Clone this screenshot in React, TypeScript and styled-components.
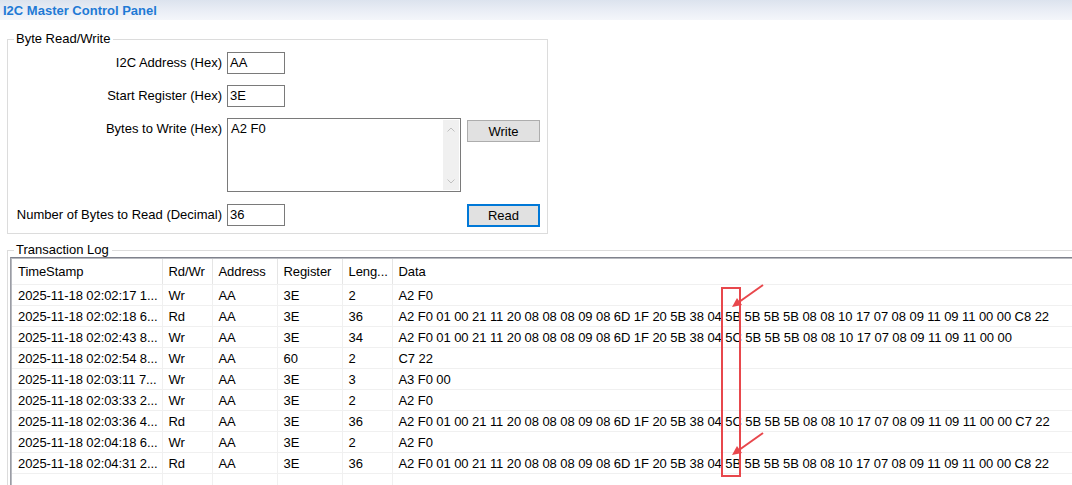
import styled, { createGlobalStyle } from 'styled-components'

const GlobalStyle = createGlobalStyle`
    html, body {
        margin: 0;
        padding: 0;
        background: #ffffff;
        overflow: hidden;
    }
    body {
        font-family: "Liberation Sans", Arial, sans-serif;
        font-size: 13px;
        color: #000000;
    }
`

const rows = [
    ['2025-11-18 02:02:17 1...', 'Wr', 'AA', '3E', '2', 'A2 F0'],
    ['2025-11-18 02:02:18 6...', 'Rd', 'AA', '3E', '36', 'A2 F0 01 00 21 11 20 08 08 08 09 08 6D 1F 20 5B 38 04 5B 5B 5B 5B 08 08 10 17 07 08 09 11 09 11 00 00 C8 22'],
    ['2025-11-18 02:02:43 8...', 'Wr', 'AA', '3E', '34', 'A2 F0 01 00 21 11 20 08 08 08 09 08 6D 1F 20 5B 38 04 5C 5B 5B 5B 08 08 10 17 07 08 09 11 09 11 00 00'],
    ['2025-11-18 02:02:54 8...', 'Wr', 'AA', '60', '2', 'C7 22'],
    ['2025-11-18 02:03:11 7...', 'Wr', 'AA', '3E', '3', 'A3 F0 00'],
    ['2025-11-18 02:03:33 2...', 'Wr', 'AA', '3E', '2', 'A2 F0'],
    ['2025-11-18 02:03:36 4...', 'Rd', 'AA', '3E', '36', 'A2 F0 01 00 21 11 20 08 08 08 09 08 6D 1F 20 5B 38 04 5C 5B 5B 5B 08 08 10 17 07 08 09 11 09 11 00 00 C7 22'],
    ['2025-11-18 02:04:18 6...', 'Wr', 'AA', '3E', '2', 'A2 F0'],
    ['2025-11-18 02:04:31 2...', 'Rd', 'AA', '3E', '36', 'A2 F0 01 00 21 11 20 08 08 08 09 08 6D 1F 20 5B 38 04 5B 5B 5B 5B 08 08 10 17 07 08 09 11 09 11 00 00 C8 22'],
]

const columns = [
    { title: 'TimeStamp', width: 150 },
    { title: 'Rd/Wr', width: 50 },
    { title: 'Address', width: 65 },
    { title: 'Register', width: 65 },
    { title: 'Leng...', width: 50 },
    { title: 'Data', width: 760 },
]

const Chevron = ({ up }: { up?: boolean }) => (
    <svg width="8" height="5" viewBox="0 0 8 5">
        <polyline
            points={up ? '0.5,4.5 4,1 7.5,4.5' : '0.5,0.5 4,4 7.5,0.5'}
            fill="none"
            stroke="#c0c0c0"
            strokeWidth="1"
        />
    </svg>
)

const Annotation = () => (
    <Overlay width="1072" height="485" viewBox="0 0 1072 485">
        <rect x="722" y="288" width="18" height="188" fill="none" stroke="#e8474c" strokeWidth="2" />
        <line x1="763" y1="285" x2="739" y2="302" stroke="#e8474c" strokeWidth="2" />
        <polygon points="732,307 742,305 737,298" fill="#e8474c" />
        <line x1="763" y1="433" x2="739" y2="450" stroke="#e8474c" strokeWidth="2" />
        <polygon points="732,455 742,453 737,446" fill="#e8474c" />
    </Overlay>
)

const App = () => {
    return (
        <>
        <GlobalStyle />
        <Page>
            <TitleBar>I2C Master Control Panel</TitleBar>
            <Content>
                <GroupBox $width="541px">
                    <Legend $offset="-1px">Byte Read/Write</Legend>
                    <FormGrid>
                        <Label>I2C Address (Hex)</Label>
                        <TextBox>AA</TextBox>
                        <span />

                        <Label>Start Register (Hex)</Label>
                        <TextBox>3E</TextBox>
                        <span />

                        <Label $top>Bytes to Write (Hex)</Label>
                        <TextArea>
                            <TextAreaText>A2 F0</TextAreaText>
                            <ScrollBar>
                                <Chevron up />
                                <Chevron />
                            </ScrollBar>
                        </TextArea>
                        <Button $top>Write</Button>

                        <Label>Number of Bytes to Read (Decimal)</Label>
                        <TextBox>36</TextBox>
                        <Button $focused>Read</Button>
                    </FormGrid>
                </GroupBox>

                <LogBox $width="1100px">
                    <Legend $offset="4px">Transaction Log</Legend>
                    <ListView>
                        <Table>
                            <colgroup>
                                {columns.map((c) => <col key={c.title} style={{ width: c.width }} />)}
                            </colgroup>
                            <thead>
                                <tr>
                                    {columns.map((c) => <HeadCell key={c.title}>{c.title}</HeadCell>)}
                                </tr>
                            </thead>
                            <tbody>
                                {rows.map((r, i) => (
                                    <tr key={i}>
                                        {r.map((v, j) => <Cell key={j}>{v}</Cell>)}
                                    </tr>
                                ))}
                                <tr>
                                    {columns.map((c) => <Cell key={c.title}>&nbsp;</Cell>)}
                                </tr>
                            </tbody>
                        </Table>
                    </ListView>
                </LogBox>
            </Content>
            <Annotation />
        </Page>
        </>
    )
}

export default App

const Page = styled.div`
    position: relative;
    width: 1072px;
    height: 485px;
    overflow: hidden;
    background: #ffffff;
`

const TitleBar = styled.div`
    height: 20px;
    line-height: 21px;
    padding-left: 3px;
    background: linear-gradient(to bottom, #dce3ee 0%, #e9edf5 50%, #f4f6fa 100%);
    color: #1f7ad5;
    font-weight: bold;
    font-size: 13px;
`

const Content = styled.div`
    padding: 12px 0 0 7px;
`

const GroupBox = styled.fieldset<{ $width: string }>`
    box-sizing: border-box;
    width: ${(p) => p.$width};
    margin: 0;
    padding: 6px 7px 7px 7px;
    border: 1px solid #dcdcdc;
`

const LogBox = styled(GroupBox)`
    margin-top: 9px;
    height: 400px;
    padding: 0 0 0 2px;
`

const Legend = styled.legend<{ $offset: string }>`
    margin-left: ${(p) => p.$offset};
    padding: 0 3px 0 2px;
    line-height: 14px;
    font-size: 13px;
`

const FormGrid = styled.div`
    display: grid;
    grid-template-columns: 207px 235px 73px;
    grid-template-rows: 22px 22px 75px 22px;
    column-gap: 5px;
    row-gap: 11px;
`

const Label = styled.div<{ $top?: boolean }>`
    text-align: right;
    line-height: 22px;
    align-self: ${(p) => (p.$top ? 'start' : 'center')};
    white-space: nowrap;
`

const TextBox = styled.div`
    box-sizing: border-box;
    width: 58px;
    height: 22px;
    border: 1px solid #7a7a7a;
    padding: 0 2px;
    line-height: 20px;
`

const TextArea = styled.div`
    box-sizing: border-box;
    width: 234px;
    height: 74px;
    border: 1px solid #7a7a7a;
    display: flex;
`

const TextAreaText = styled.div`
    flex: 1;
    padding: 3px 3px;
    line-height: 14px;
`

const ScrollBar = styled.div`
    width: 16px;
    margin: 1px 1px 1px 0;
    background: #f0f0f0;
    display: flex;
    flex-direction: column;
    align-items: center;
    justify-content: space-between;
    padding: 7px 0 6px;
`

const Button = styled.div<{ $top?: boolean; $focused?: boolean }>`
    box-sizing: border-box;
    width: 73px;
    height: ${(p) => (p.$focused ? '23px' : '22px')};
    margin-top: ${(p) => (p.$top ? '2px' : '0')};
    align-self: start;
    background: #e1e1e1;
    border: ${(p) => (p.$focused ? '2px solid #0078d7' : '1px solid #adadad')};
    display: flex;
    align-items: center;
    justify-content: center;
`

const ListView = styled.div`
    border-top: 1px solid #7f828c;
    border-left: 1px solid #9a9ca4;
    box-shadow: inset 1px 1px 0 #b8bac0;
    padding: 1px 0 0 1px;
    height: 400px;
    overflow: hidden;
`

const Table = styled.table`
    border-collapse: collapse;
    table-layout: fixed;
    width: 1140px;
    letter-spacing: -0.075px;
`

const HeadCell = styled.th`
    height: 25px;
    padding: 0 0 0 6px;
    font-weight: normal;
    text-align: left;
    border-right: 1px solid #e5e5e5;
    border-bottom: 1px solid #f0f0f0;
    white-space: nowrap;
    overflow: hidden;
`

const Cell = styled.td`
    height: 20px;
    padding: 0 0 0 6px;
    border-right: 1px solid #f0f0f0;
    border-bottom: 1px solid #f0f0f0;
    white-space: nowrap;
    overflow: hidden;
`

const Overlay = styled.svg`
    position: absolute;
    left: 0;
    top: 0;
    pointer-events: none;
`
